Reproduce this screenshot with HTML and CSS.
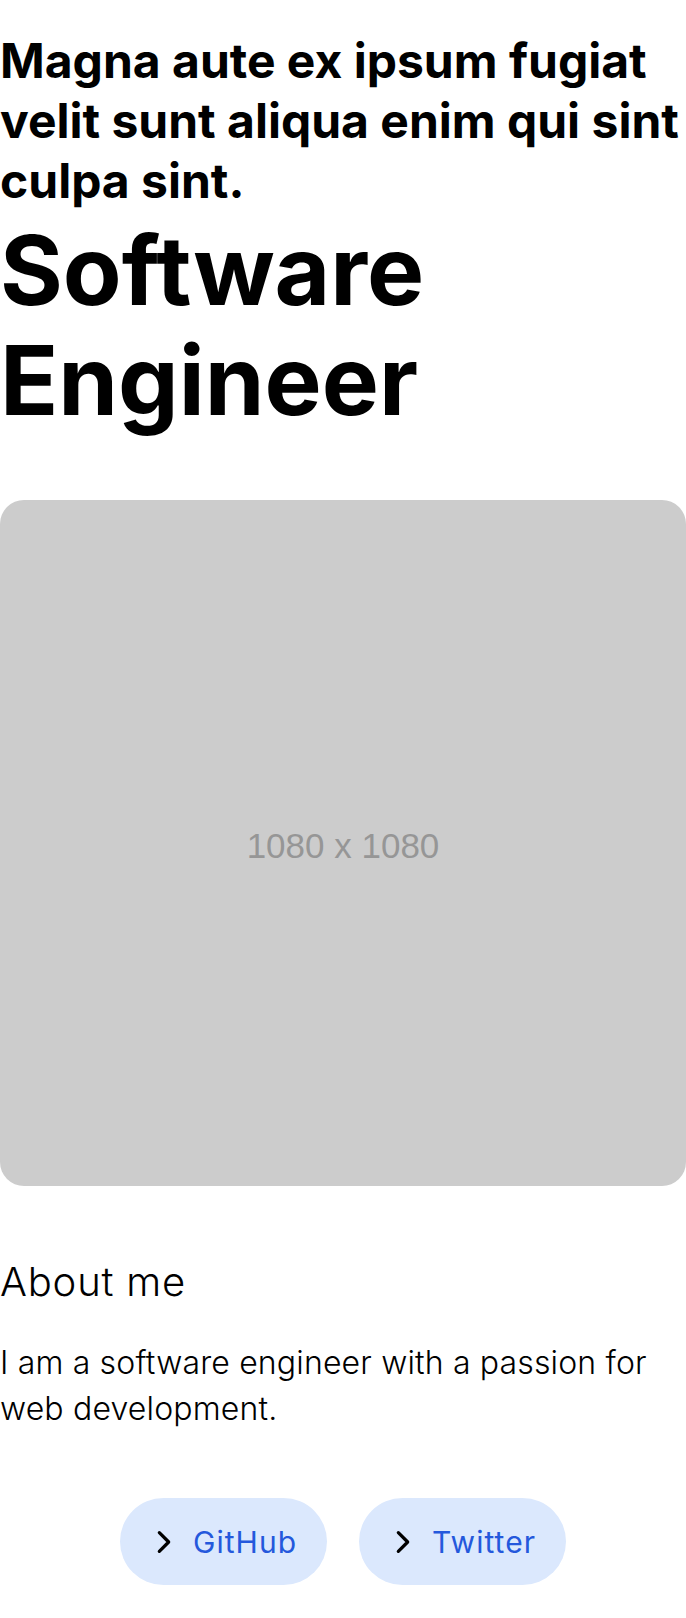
FILE: index.html
```html
<!DOCTYPE html>
<html lang="en">
<head>
  <meta charset="UTF-8">
  <meta name="viewport" content="width=device-width, initial-scale=1.0">
  <title>Software Engineer</title>
  <link rel="stylesheet" href="styles.css">
</head>
<body>
  <main class="page">
    <header class="intro">
      <h2 class="tagline">Magna aute ex ipsum fugiat velit sunt aliqua enim qui sint culpa sint.</h2>
      <h1 class="title">Software Engineer</h1>
    </header>

    <div class="photo">
      <span class="photo-label">1080 x 1080</span>
    </div>

    <section class="about">
      <h3 class="about-title">About me</h3>
      <p class="about-text">I am a software engineer with a passion for web development.</p>
    </section>

    <nav class="links">
      <a class="link" href="#">
        <svg class="chevron" viewBox="0 0 24 24" width="28" height="28"><path d="M8 4l8 8-8 8" fill="none" stroke="currentColor" stroke-width="2.8" stroke-linecap="round" stroke-linejoin="round"/></svg>
        <span>GitHub</span>
      </a>
      <a class="link" href="#">
        <svg class="chevron" viewBox="0 0 24 24" width="28" height="28"><path d="M8 4l8 8-8 8" fill="none" stroke="currentColor" stroke-width="2.8" stroke-linecap="round" stroke-linejoin="round"/></svg>
        <span>Twitter</span>
      </a>
    </nav>
  </main>
</body>
</html>
```

FILE: styles.css
```css
* {
  box-sizing: border-box;
}
body {
  margin: 0;
  background: #fff;
  color: #000;
  font-family: Inter, "Noto Sans", sans-serif;
}
.page {
  padding: 31px 0 33px;
}

.tagline {
  margin: 0;
  font-size: 48px;
  line-height: 60px;
  font-weight: 700;
}
.title {
  margin: 4px 0 0;
  font-size: 96px;
  line-height: 110px;
  font-weight: 700;
}

.photo {
  margin-top: 65px;
  padding-top: 6px;
  width: 100%;
  aspect-ratio: 1 / 1;
  border-radius: 24px;
  background: #cccccc;
  display: flex;
  align-items: center;
  justify-content: center;
}
.photo-label {
  font-family: "Liberation Sans", Arial, sans-serif;
  font-size: 35px;
  color: #969696;
}

.about {
  margin-top: 72px;
}
.about-title {
  margin: 0;
  font-size: 40px;
  line-height: 48px;
  font-weight: 300;
  letter-spacing: 0.02em;
}
.about-text {
  margin: 34px 0 0;
  font-size: 32px;
  line-height: 46px;
  font-weight: 300;
  letter-spacing: 0.005em;
}

.links {
  margin-top: 66px;
  display: flex;
  justify-content: center;
  gap: 32px;
}
.link {
  display: flex;
  align-items: center;
  gap: 15px;
  width: 207px;
  height: 87px;
  padding: 0 30px;
  border-radius: 44px;
  background: #dbe8fd;
  color: #2458dc;
  font-size: 30px;
  letter-spacing: 0.035em;
  text-decoration: none;
}
.chevron {
  color: #000;
  flex: none;
}
```
